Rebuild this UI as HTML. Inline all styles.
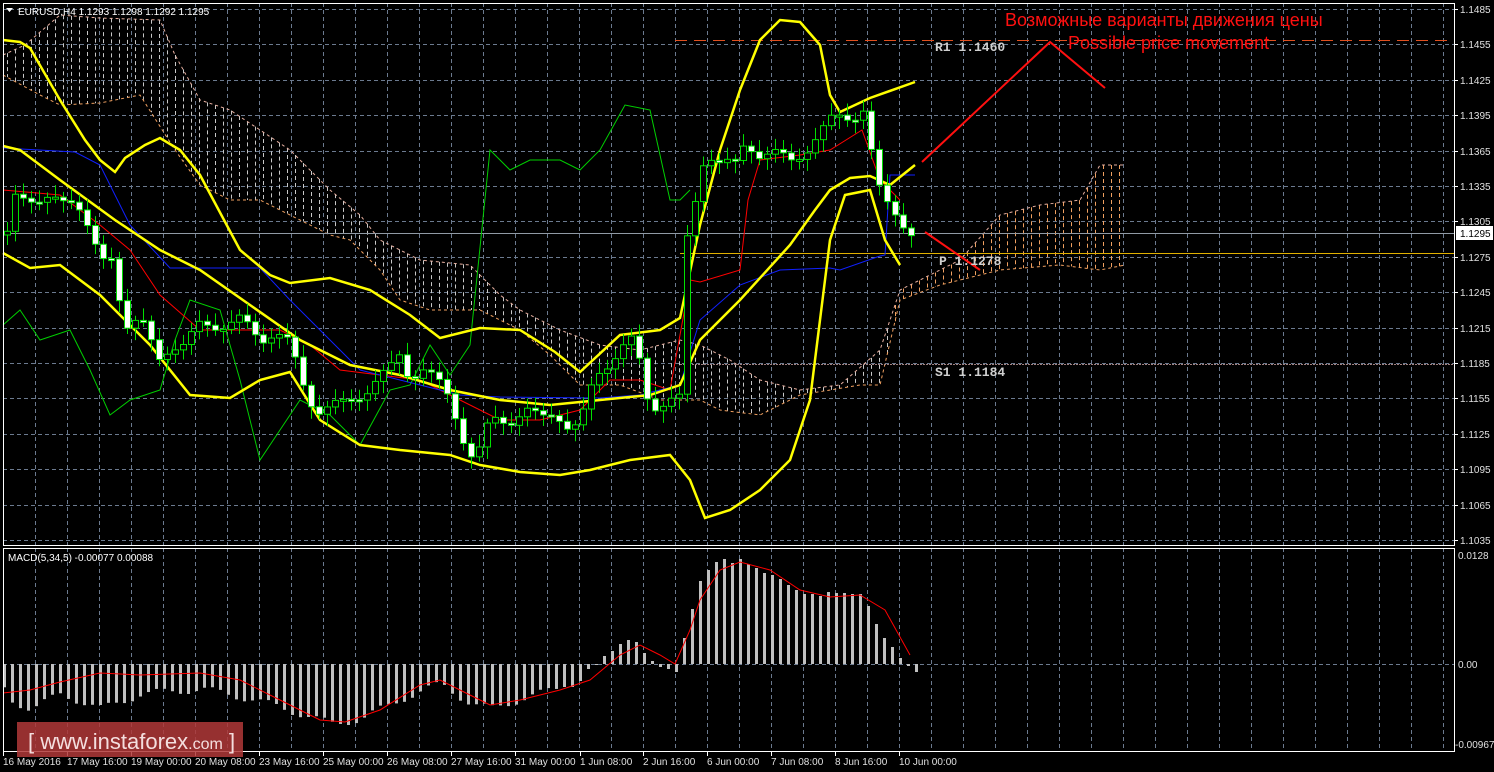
<!DOCTYPE html>
<html><head><meta charset="utf-8"><style>
html,body{margin:0;padding:0;background:#000;width:1494px;height:772px;overflow:hidden}
svg{display:block}
text{font-family:"Liberation Sans",sans-serif}
text.m{font-family:"Liberation Mono",monospace}
</style></head><body>
<svg id="s" width="1494" height="772" xmlns="http://www.w3.org/2000/svg"></svg>
<script>
var s=document.getElementById('s'),h='';
function P(pts){return pts.map(function(p){return p[0]+','+p[1]}).join(' ')}
function pl(pts,c,w,extra){h+='<polyline points="'+P(pts)+'" fill="none" stroke="'+c+'" stroke-width="'+w+'" '+(extra||'')+'/>';}
function interp(pts,x){for(var i=0;i<pts.length-1;i++){if(x>=pts[i][0]&&x<=pts[i+1][0]){var t=(x-pts[i][0])/(pts[i+1][0]-pts[i][0]);return pts[i][1]+t*(pts[i+1][1]-pts[i][1]);}}return pts[pts.length-1][1];}
var gc='#6b7a8f';
for(var k=0;k<=15;k++){var y=Math.round(9+k*35.4)+.5;h+='<line x1="3" y1="'+y+'" x2="1454" y2="'+y+'" stroke="'+gc+'" stroke-dasharray="4,3"/>';}
for(var k=0;k<=44;k++){var x=35+32*k+.5;h+='<line x1="'+x+'" y1="3" x2="'+x+'" y2="545" stroke="'+gc+'" stroke-dasharray="4,3"/><line x1="'+x+'" y1="548" x2="'+x+'" y2="751" stroke="'+gc+'" stroke-dasharray="4,3"/>';}
h+='<line x1="3" y1="664.5" x2="1454" y2="664.5" stroke="'+gc+'" stroke-dasharray="4,3"/>';
var cu=[[3,55],[25,45],[60,15],[100,18],[160,20],[175,55],[200,100],[230,110],[260,130],[290,150],[310,170],[330,190],[360,215],[380,240],[420,260],[470,265],[500,295],[520,310],[560,330],[600,345],[640,350],[680,340],[700,345],[730,360],[760,380],[800,390],[840,385],[880,350],[900,290],[930,275],[960,260],[1000,215],[1040,205],[1080,200],[1100,165],[1125,165]];
var cl=[[3,75],[40,95],[60,105],[100,103],[140,95],[175,150],[200,185],[230,200],[260,200],[300,220],[330,235],[350,240],[380,270],[400,300],[430,310],[480,310],[520,330],[550,355],[580,385],[620,385],[660,400],[700,400],[720,410],[760,415],[800,395],[860,385],[880,385],[900,300],[940,285],[1000,270],[1060,265],[1100,270],[1125,265]];
for(var x=7;x<=1125;x+=8){var a=interp(cu,x),b=interp(cl,x);var c=x>890?'#f0a060':'#c8c8c8';h+='<line x1="'+(x+.5)+'" y1="'+Math.min(a,b)+'" x2="'+(x+.5)+'" y2="'+Math.max(a,b)+'" stroke="'+c+'" stroke-width="1" stroke-dasharray="4,3"/>';}
pl(cu,'#e8b0a0',1,'stroke-dasharray="3,3"');pl(cl,'#f0a060',1,'stroke-dasharray="3,3"');
h+='<line x1="675" y1="40.5" x2="1454" y2="40.5" stroke="#e05020" stroke-dasharray="12,7"/>';
h+='<line x1="680" y1="253.5" x2="1454" y2="253.5" stroke="#e0b000"/>';
h+='<line x1="680" y1="364.5" x2="1454" y2="364.5" stroke="#a08080" stroke-dasharray="2,1"/>';
h+='<line x1="3" y1="233.5" x2="1454" y2="233.5" stroke="#909aa5"/>';
pl([[3,325],[20,310],[40,340],[70,330],[90,370],[110,415],[130,400],[160,390],[175,340],[190,300],[220,310],[240,380],[260,460],[280,430],[300,400],[330,415],[360,445],[390,390],[410,385],[430,345],[450,375],[470,345],[490,150],[510,170],[530,160],[560,160],[580,170],[600,150],[625,105],[650,110],[670,200],[680,200],[690,190]],'#00d000',1);
pl([[3,190],[60,195],[100,225],[130,250],[160,295],[200,330],[240,330],[280,330],[310,345],[340,370],[380,375],[420,380],[460,400],[500,420],[540,420],[580,410],[610,380],[640,380],[670,390],[690,280],[700,282],[740,270],[748,200],[760,160],[800,155],[830,150],[862,130],[880,180],[900,200]],'#ff0000',1);
pl([[3,148],[75,152],[100,165],[130,225],[170,268],[260,268],[290,300],[320,330],[360,370],[420,385],[460,395],[500,397],[600,398],[640,395],[680,385],[700,320],[740,285],[780,270],[830,268],[840,270],[880,256],[885,255],[890,175],[915,175]],'#1020ff',1);
pl([[3,40],[20,42],[30,48],[60,100],[85,140],[100,160],[115,172],[125,158],[145,145],[160,138],[180,150],[200,175],[240,250],[270,275],[290,283],[330,278],[370,290],[410,315],[440,338],[480,328],[520,330],[555,352],[580,372],[620,335],[660,330],[680,318],[700,225],[720,150],[740,90],[760,40],[780,20],[800,22],[820,45],[830,95],[840,112],[870,98],[915,82]],'#ffff00',2.5);
pl([[3,146],[20,150],[60,180],[115,220],[160,250],[200,270],[250,305],[300,340],[350,365],[400,375],[450,390],[500,400],[550,405],[600,400],[650,395],[680,385],[700,340],[740,300],[790,245],[815,210],[830,190],[850,178],[870,176],[890,185],[915,165]],'#ffff00',2.5);
pl([[3,253],[30,268],[60,265],[100,295],[150,345],[190,395],[230,398],[260,380],[290,372],[320,420],[360,445],[400,450],[450,455],[480,465],[520,472],[560,475],[590,470],[630,460],[670,455],[690,480],[705,518],[730,510],[760,490],[790,460],[810,400],[820,320],[830,240],[845,195],[870,190],[885,240],[900,265]],'#ffff00',2.5);
var cp=[[8,195],[20,190],[40,205],[60,200],[75,195],[90,235],[100,265],[115,255],[122,325],[140,320],[158,360],[170,345],[185,345],[200,325],[220,325],[240,320],[260,340],[275,330],[290,345],[300,380],[315,410],[330,405],[345,405],[360,395],[375,380],[390,370],[400,355],[410,380],[420,365],[435,380],[450,400],[460,430],[470,455],[480,450],[490,420],[500,420],[510,420],[525,410],[540,420],[555,410],[570,430],[580,425],[595,375],[610,360],[625,345],[635,340],[645,395],[655,405],[670,400],[680,400],[685,250],[695,200],[705,150],[720,165],[735,165],[745,140],[760,155],[775,155],[790,160],[805,150],[820,135],[835,115],[855,115],[865,110],[870,150],[880,195],[890,205],[900,215],[908,235]];
var prev=interp(cp,3);
for(var x=7;x<=915;x+=8){var c=interp(cp,x)+Math.sin(x*1.7)*6;var o=prev;prev=c;var t=Math.min(o,c),b=Math.max(o,c);if(b-t<2)b=t+2;var hi=t-4-Math.abs(Math.sin(x))*8,lo=b+4+Math.abs(Math.cos(x))*8;
h+='<line x1="'+(x+.5)+'" y1="'+hi+'" x2="'+(x+.5)+'" y2="'+lo+'" stroke="#00e000"/>';
h+='<rect x="'+(x-2.5)+'" y="'+t+'" width="6" height="'+(b-t)+'" fill="'+(c<o?'#000':'#fff')+'" stroke="#00e000"/>';}
pl([[922,162],[1050,42],[1105,88]],'#ff1010',2);pl([[925,232],[980,270]],'#ff1010',2);
h+='<text x="1005" y="26" fill="#ff1010" font-size="18">Возможные варианты движения цены</text>';
h+='<text x="1068" y="49" fill="#ff1010" font-size="18">Possible price movement</text>';
h+='<g font-size="13" font-weight="bold" fill="#d0d0d0"><text class="m" x="935" y="51">R1 1.1460</text><text class="m" x="939" y="265">P 1.1278</text><text class="m" x="935" y="376">S1 1.1184</text></g>';
var hv=[-23,-23,-17,-5,0,8,13,20,24,22,11,3,-3,-5,-8,26,55,83,94,102,105,101,105,100,96,91,89,85,79,74,70,70,68,72,71,71,70,70,58,40,26,17,6,-2,-8];
var env=[[7,-35],[30,-45],[60,-30],[100,-45],[140,-30],[200,-25],[250,-35],[300,-50],[330,-60],[360,-55],[400,-35],[440,-20],[470,-40],[490,-45],[520,-35],[555,-25]];
for(var x=3;x<=915;x+=8){var v=x>=563?hv[Math.round((x-563)/8)]:interp(env,x)+Math.sin(x*0.9)*4;if(v===undefined)continue;var y0=664,y1=664-v;h+='<rect x="'+x+'" y="'+Math.min(y0,y1)+'" width="3" height="'+Math.max(1,Math.abs(v))+'" fill="#c0c0c0"/>';}
pl([[3,693],[30,690],[60,682],[100,673],[140,675],[200,673],[240,680],[280,700],[320,720],[345,722],[380,710],[420,685],[440,680],[470,695],[490,705],[520,700],[560,690],[590,680],[620,655],[640,645],[660,655],[675,664],[690,630],[700,600],[720,570],[740,562],[770,570],[800,590],[830,597],[860,595],[885,610],[910,655]],'#ff0000',1);
h+='<rect x="3.5" y="3.5" width="1451" height="542" fill="none" stroke="#fff"/>';
h+='<rect x="3.5" y="548.5" width="1451" height="203" fill="none" stroke="#fff"/>';
var g='<g font-size="10" fill="#e0e0e0">';
for(var k=0;k<=15;k++){var y=Math.round(9+k*35.4);var p=(1.1485-k*0.003).toFixed(4);g+='<line x1="1454" y1="'+(y+.5)+'" x2="1458" y2="'+(y+.5)+'" stroke="#fff"/><text x="1460" y="'+(y+4)+'">'+p+'</text>';}
g+='<rect x="1456" y="226" width="37" height="14" fill="#fff"/><text x="1460" y="237" fill="#000">1.1295</text>';
g+='<text x="1458" y="559">0.0128</text><text x="1458" y="668">0.00</text><text x="1455" y="748">-0.00967</text>';
var tl=[['16 May 2016',3],['17 May 16:00',67],['19 May 00:00',131],['20 May 08:00',195],['23 May 16:00',259],['25 May 00:00',323],['26 May 08:00',387],['27 May 16:00',451],['31 May 00:00',515],['1 Jun 08:00',580],['2 Jun 16:00',643],['6 Jun 00:00',707],['7 Jun 08:00',771],['8 Jun 16:00',835],['10 Jun 00:00',899]];
tl.forEach(function(t){g+='<line x1="'+(t[1]+.5)+'" y1="752" x2="'+(t[1]+.5)+'" y2="756" stroke="#fff"/><text x="'+t[1]+'" y="765">'+t[0]+'</text>';});
g+='<text x="18" y="15" fill="#fff">EURUSD,H4  1.1293 1.1298 1.1292 1.1295</text><text x="8" y="561" fill="#fff">MACD(5,34,5) -0.00077 0.00088</text></g>';
g+='<polygon points="6,8 13,8 9.5,12" fill="#fff"/>';
h+=g;
h+='<rect x="17" y="722" width="226" height="35" fill="#b03838" opacity="0.85"/><text x="28" y="749" fill="#f4dede" font-size="22">[ www.instaforex<tspan font-size="16">.com</tspan> ]</text>';
s.innerHTML=h;
</script>
</body></html>
